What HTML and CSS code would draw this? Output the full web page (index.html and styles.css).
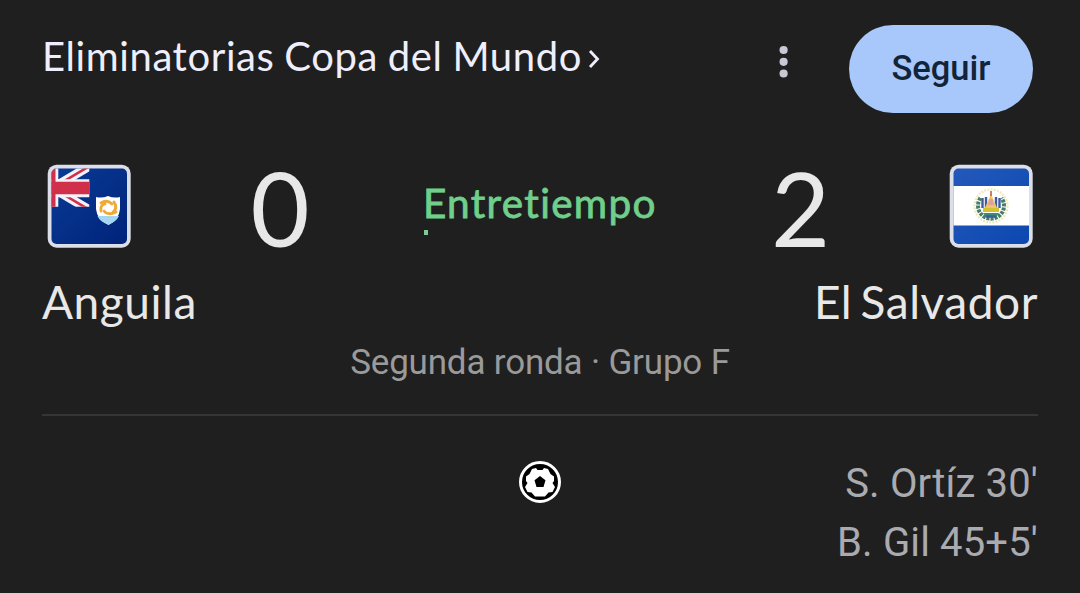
FILE: index.html
```html
<!DOCTYPE html>
<html lang="es">
<head>
    <meta charset="UTF-8">
    <meta name="viewport" content="width=device-width, initial-scale=1.0">
    <title>Anguila - El Salvador</title>
    <link rel="stylesheet" href="styles.css">
</head>
<body>

    <div class="card">
        <header class="top">
            <a class="league">
                <span class="league-name">Eliminatorias Copa del Mundo</span>
                <svg class="chevron" width="12" height="20" viewBox="0 0 12 20"><path d="M2 2 9.500 10 2 18" fill="none" stroke="#eeeefc" stroke-width="2.800"/></svg>
            </a>
            <svg class="menu" width="10" height="34" viewBox="0 0 10 34" fill="#c9c8d6">
                <circle cx="4.6" cy="5" r="4.1"/>
                <circle cx="4.6" cy="16.8" r="4.1"/>
                <circle cx="4.6" cy="28.5" r="4.1"/>
            </svg>
            <button class="follow">Seguir</button>
        </header>

        <div class="match">
            <svg class="flag" width="84" height="84" viewBox="0 0 84 84">
                <defs>
                    <linearGradient id="navy" x1="0" y1="0" x2="1" y2="1">
                        <stop offset="0" stop-color="#0a3b96"/>
                        <stop offset="1" stop-color="#00237a"/>
                    </linearGradient>
                    <clipPath id="inner"><rect x="4.5" y="4.5" width="75.5" height="75.5" rx="5"/></clipPath>
                    <clipPath id="canton"><rect x="4" y="4" width="38.300" height="38.700"/></clipPath>
                </defs>
                <rect x="0.7" y="0.7" width="83" height="83" rx="9" fill="#dcdfe8"/>
                <g clip-path="url(#inner)">
                    <rect x="4" y="4" width="76" height="76" fill="url(#navy)"/>
                    <g clip-path="url(#canton)">
                        <path d="M4 25 46 0M4 23 46 48" stroke="#f2f2f8" stroke-width="9"/>
                        <path d="M4 25 46 0M4 23 46 48" stroke="#d0304a" stroke-width="2.600"/>
                        <path d="M8 4V43" stroke="#f2f2f8" stroke-width="6.600"/>
                        <path d="M4 24.200H43" stroke="#f2f2f8" stroke-width="18"/>
                        <path d="M4 24H43" stroke="#d0304a" stroke-width="12.500"/>
                        <path d="M4 4H8.500V43H4Z" fill="#d0304a"/>
                    </g>
                    <path d="M49 33Q55 34.500 61 32Q67 34.500 73 33V45Q72 56 61.500 61Q50 56 49 45Z" fill="#fff"/>
                    <path d="M50.500 52H72Q69 58 61.500 60.500Q53 58 50.500 52Z" fill="#a6d4f3"/>
                    <g fill="none" stroke="#f0a836" stroke-width="2.800" stroke-linecap="round">
                        <path d="M54 39Q60 35 65 40"/>
                        <path d="M67 38Q71 44 66 48"/>
                        <path d="M69 48Q61 52 57 47"/>
                        <path d="M54 47Q53 41 58 40"/>
                    </g>
                </g>
            </svg>
            <div class="score score-home">0</div>
            <div class="status">
                <span class="status-text">Entretiempo</span>
                <span class="status-dot"></span>
            </div>
            <div class="score score-away">2</div>
            <svg class="flag" width="84" height="84" viewBox="0 0 84 84">
                <defs>
                    <linearGradient id="blue" x1="0" y1="0" x2="1" y2="1">
                        <stop offset="0" stop-color="#2459ba"/>
                        <stop offset="1" stop-color="#0c48b0"/>
                    </linearGradient>
                </defs>
                <rect x="0.7" y="0.7" width="83" height="83" rx="9" fill="#dcdfe8"/>
                <g clip-path="url(#inner)">
                    <rect x="4" y="4" width="76" height="76" fill="url(#blue)"/>
                    <rect x="4" y="22" width="76" height="39.500" fill="#fff"/>
                    <circle cx="42" cy="42" r="16.500" fill="none" stroke="#efe8bd" stroke-width="2.200" stroke-dasharray="2 1.200"/>
                    <path d="M31.500 34A13 13 0 1 0 52.500 34" fill="none" stroke="#477d67" stroke-width="4" stroke-dasharray="3 1"/>
                    <path d="M33.500 34V44M37 33V44M47 33V44M50.500 34V44" stroke="#3c5c9e" stroke-width="2.400"/>
                    <path d="M42 30 49 46H35Z" fill="#efc46e"/>
                    <path d="M42 27V32" stroke="#c05a46" stroke-width="1.600"/>
                    <path d="M40.500 35H43.500L45 41H39Z" fill="#e3a09a"/>
                    <rect x="34" y="44" width="16" height="4" fill="#d4c22f"/>
                    <path d="M34 49H50L47 53H37Z" fill="#3f8a75"/>
                    <path d="M37 52.500H47" stroke="#3d5da2" stroke-width="2.500"/>
                </g>
            </svg>
        </div>

        <div class="teams">
            <span class="team team-home">Anguila</span>
            <span class="team team-away">El Salvador</span>
        </div>

        <div class="round">Segunda ronda · Grupo F</div>

        <div class="goals">
            <svg class="ball" width="42" height="42" viewBox="0 0 42 42">
                <circle cx="21" cy="21" r="19.500" fill="#000" stroke="#fff" stroke-width="3"/>
                <path d="M13 8 17 7 18.500 9H23.500L25 7 29 8 31.500 13 35 15.500 35 20 33.500 22 36 26 33.500 31 29.500 31.500 26 35.500H16L12.500 31.500 8.500 31 6 26 8.500 22 7 20V15.500L10.500 13Z" fill="#fff"/>
                <path d="M21 15 26.500 19.200 24.500 26H17.500L15.500 19.200Z" fill="#000"/>
            </svg>
            <div class="scorers">
                <div class="scorer">S. Ortíz 30'</div>
                <div class="scorer">B. Gil 45+5'</div>
            </div>
        </div>
    </div>

</body>
</html>
```

FILE: styles.css
```css
* {
    box-sizing: border-box;
}
body {
    margin: 0;
    background-color: #1f1f1f;
    font-family: Roboto, sans-serif;
    overflow: hidden;
}
svg {
    display: block;
    flex: none;
}
.card {
    width: 1080px;
    height: 593px;
    padding: 25px 42px 0;
}
.top {
    display: flex;
    height: 88px;
    padding-right: 5px;
}
.league {
    display: flex;
    width: 737px;
    color: #eeeefc;
}
.league-name {
    padding-top: 7px;
    font-family: Lato, sans-serif;
    font-size: 40px;
    line-height: 48px;
    letter-spacing: 0.6px;
    word-spacing: -1px;
    font-variant-ligatures: none;
    white-space: nowrap;
}
.chevron {
    margin: 24px 0 0 6px;
}
.menu {
    margin: 20px 60px 0 0;
}
.follow {
    width: 184px;
    height: 88px;
    margin-left: auto;
    padding: 0 0 2px;
    border: none;
    border-radius: 44px;
    background-color: #a8c7fa;
    color: #13243a;
    font-family: Roboto, sans-serif;
    font-size: 34.500px;
    font-weight: 500;
}
.match {
    display: grid;
    grid-template-columns: 84px 292px 348px 178px 84px;
    margin-top: 51px;
    padding: 0 5px;
    height: 84px;
}
.score {
    font-family: Lato, sans-serif;
    font-size: 102px;
    line-height: 87px;
    color: #e8e8e8;
}
.score-home {
    padding-left: 6px;
    text-align: center;
}
.status {
    display: flex;
    flex-direction: column;
    align-items: flex-start;
    padding-top: 15px;
}
.status-text {
    font-family: Lato, sans-serif;
    font-size: 40.500px;
    line-height: 48px;
    letter-spacing: 1.3px;
    font-variant-ligatures: none;
    color: #6fcf8b;
    -webkit-text-stroke: 0.8px #6fcf8b;
}
.status-dot {
    width: 4px;
    height: 5px;
    margin: 3px 0 0 1px;
    background-color: #81c995;
}
.teams {
    display: flex;
    justify-content: space-between;
    height: 60px;
    margin-top: 24px;
}
.team {
    font-family: Lato, sans-serif;
    font-size: 46px;
    line-height: 60px;
    letter-spacing: 0.55px;
    word-spacing: -4px;
    color: #e8e8e8;
}
.round {
    height: 84px;
    padding-top: 9px;
    border-bottom: 2px solid #343536;
    text-align: center;
    font-size: 35px;
    line-height: 44px;
    letter-spacing: -0.18px;
    color: #9a9a9a;
}
.goals {
    display: grid;
    grid-template-columns: 1fr 42px 1fr;
    padding-top: 37px;
}
.ball {
    grid-column: 2;
    margin-top: 8px;
}
.scorers {
    padding-top: 1px;
    text-align: right;
}
.scorer {
    font-size: 40px;
    line-height: 59px;
    letter-spacing: 0.15px;
    color: #a9abb0;
}
```
